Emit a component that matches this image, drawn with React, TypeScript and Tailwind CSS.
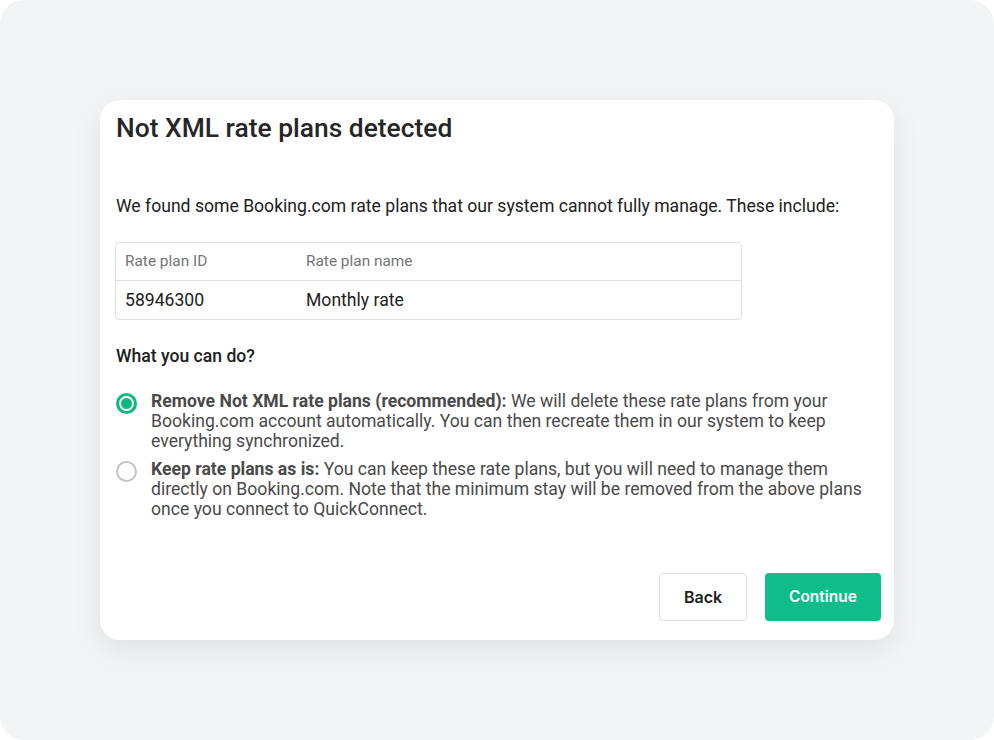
import React, { useState } from 'react'

const options = [
  {
    id: 'remove',
    title: 'Remove Not XML rate plans (recommended):',
    text: ' We will delete these rate plans from your Booking.com account automatically. You can then recreate them in our system to keep everything synchronized.',
  },
  {
    id: 'keep',
    title: 'Keep rate plans as is:',
    text: ' You can keep these rate plans, but you will need to manage them directly on Booking.com. Note that the minimum stay will be removed from the above plans once you connect to QuickConnect.',
  },
]

export default function App() {
  const [choice, setChoice] = useState('remove')

  return (
    <div className="bg-white w-[994px] h-[740px]" style={{ fontFamily: 'Roboto, "Noto Sans", sans-serif' }}>
      <div className="w-full h-full bg-[#f3f4f6] rounded-[24px] pt-[100px] pl-[100px]">
        <div className="w-[794px] h-[540px] bg-white rounded-[20px] shadow-[0_10px_30px_rgba(0,0,0,0.08)] flex flex-col px-4 pt-[12px] pb-[19px]">
          <h1 className="text-[26.4px] leading-[32px] font-medium text-[#262626]">Not XML rate plans detected</h1>

          <p className="mt-[50px] text-[17.6px] leading-[24px] text-[#212121]">
            We found some Booking.com rate plans that our system cannot fully manage. These include:
          </p>

          <div className="mt-[24px] w-[627px] -ml-px border border-[#e0e0e0] rounded-[4px]">
            <div className="flex h-[38px] items-center border-b border-[#e0e0e0] text-[15.4px] text-[#757575]">
              <div className="w-[190px] pl-[9px]">Rate plan ID</div>
              <div>Rate plan name</div>
            </div>
            <div className="flex h-[38px] items-center text-[17.6px] text-[#212121]">
              <div className="w-[190px] pl-[9px]">58946300</div>
              <div>Monthly rate</div>
            </div>
          </div>

          <h2 className="mt-[24px] text-[17.6px] leading-[24px] font-medium text-[#212121]">What you can do?</h2>

          <div className="mt-[23px] flex flex-col gap-[8px]">
            {options.map((o) => {
              const active = choice === o.id
              return (
                <label key={o.id} className="flex items-start gap-[14px] cursor-pointer" onClick={() => setChoice(o.id)}>
                  <span
                    className={
                      active
                        ? 'mt-[2px] shrink-0 w-[21px] h-[21px] rounded-full border-[3px] border-[#10b981] flex items-center justify-center'
                        : 'mt-[2px] shrink-0 w-[21px] h-[21px] rounded-full border-2 border-[#c4c4c4]'
                    }
                  >
                    {active && <span className="w-[11px] h-[11px] rounded-full bg-[#10b981]" />}
                  </span>
                  <span className="text-[17.6px] leading-[20px] text-[#4a4a4a]">
                    <b className="font-bold">{o.title}</b>
                    {o.text}
                  </span>
                </label>
              )
            })}
          </div>

          <div className="mt-auto flex justify-end gap-[18px] -mr-[3px]">
            <button
              className="w-[88px] h-[48px] rounded-[4px] border border-[#e0e0e0] bg-white text-[16px] font-semibold text-[#212121]"
              style={{ fontFamily: 'Inter, sans-serif' }}
            >
              Back
            </button>
            <button
              className="w-[116px] h-[48px] rounded-[4px] bg-[#10bd8a] text-[15.5px] font-semibold text-white"
              style={{ fontFamily: 'Inter, sans-serif' }}
            >
              Continue
            </button>
          </div>
        </div>
      </div>
    </div>
  )
}
